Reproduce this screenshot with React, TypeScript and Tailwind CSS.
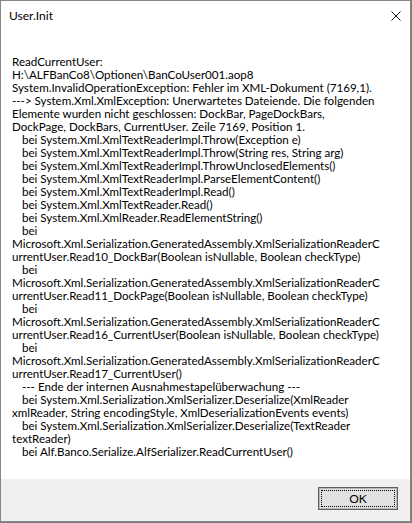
import React from "react";

// [indent, text]
const LINES: [boolean, string][] = [
  [false, "ReadCurrentUser:"],
  [false, "H:\\ALFBanCo8\\Optionen\\BanCoUser001.aop8"],
  [false, "System.InvalidOperationException: Fehler im XML-Dokument (7169,1)."],
  [false, "---> System.Xml.XmlException: Unerwartetes Dateiende. Die folgenden"],
  [false, "Elemente wurden nicht geschlossen: DockBar, PageDockBars,"],
  [false, "DockPage, DockBars, CurrentUser. Zeile 7169, Position 1."],
  [true, "bei System.Xml.XmlTextReaderImpl.Throw(Exception e)"],
  [true, "bei System.Xml.XmlTextReaderImpl.Throw(String res, String arg)"],
  [true, "bei System.Xml.XmlTextReaderImpl.ThrowUnclosedElements()"],
  [true, "bei System.Xml.XmlTextReaderImpl.ParseElementContent()"],
  [true, "bei System.Xml.XmlTextReaderImpl.Read()"],
  [true, "bei System.Xml.XmlTextReader.Read()"],
  [true, "bei System.Xml.XmlReader.ReadElementString()"],
  [true, "bei"],
  [false, "Microsoft.Xml.Serialization.GeneratedAssembly.XmlSerializationReaderC"],
  [false, "urrentUser.Read10_DockBar(Boolean isNullable, Boolean checkType)"],
  [true, "bei"],
  [false, "Microsoft.Xml.Serialization.GeneratedAssembly.XmlSerializationReaderC"],
  [false, "urrentUser.Read11_DockPage(Boolean isNullable, Boolean checkType)"],
  [true, "bei"],
  [false, "Microsoft.Xml.Serialization.GeneratedAssembly.XmlSerializationReaderC"],
  [false, "urrentUser.Read16_CurrentUser(Boolean isNullable, Boolean checkType)"],
  [true, "bei"],
  [false, "Microsoft.Xml.Serialization.GeneratedAssembly.XmlSerializationReaderC"],
  [false, "urrentUser.Read17_CurrentUser()"],
  [true, "--- Ende der internen Ausnahmestapelüberwachung ---"],
  [true, "bei System.Xml.Serialization.XmlSerializer.Deserialize(XmlReader"],
  [false, "xmlReader, String encodingStyle, XmlDeserializationEvents events)"],
  [true, "bei System.Xml.Serialization.XmlSerializer.Deserialize(TextReader"],
  [false, "textReader)"],
  [true, "bei Alf.Banco.Serialize.AlfSerializer.ReadCurrentUser()"],
];

export default function App() {
  return (
    <div className="h-[523px] w-[412px] bg-[#7c7c7c]">
      <div
        className="flex h-[522px] w-[411px] flex-col border border-[#878787] bg-white text-[11.6px] text-black"
        style={{ fontFamily: 'Lato, "Open Sans", sans-serif' }}
      >
        {/* Titelleiste */}
        <div className="flex h-[30px] shrink-0 items-center justify-between pl-[8px] pr-[9px]">
          <span className="text-[12px] leading-none">User.Init</span>
          <svg width="10" height="10" viewBox="0 0 10 10" className="mt-[-1px]">
            <path d="M0.5 0.5 L9.5 9.5 M9.5 0.5 L0.5 9.5" stroke="#111" strokeWidth="1" fill="none" />
          </svg>
        </div>

        {/* Meldungstext */}
        <div className="flex-1 pl-[11px] pt-[24px]">
          {LINES.map(([indent, text], i) => (
            <div
              key={i}
              className={`h-[13px] whitespace-pre leading-[13px] ${indent ? "pl-[10px]" : ""}`}
            >
              {text}
            </div>
          ))}
        </div>

        {/* Schaltflächenleiste */}
        <div className="flex h-[42px] shrink-0 items-start justify-end bg-[#f0f0f0] pr-[12px] pt-[8px]">
          <button className="flex h-[23px] w-[80px] items-center justify-center border border-[#5f5f5f] bg-[#e1e1e1] p-[2px] shadow-[inset_0_0_0_1px_#b8b8b8]">
            <span className="flex h-full w-full items-center justify-center border border-dotted border-black text-[12px] leading-none">
              OK
            </span>
          </button>
        </div>
      </div>
    </div>
  );
}
